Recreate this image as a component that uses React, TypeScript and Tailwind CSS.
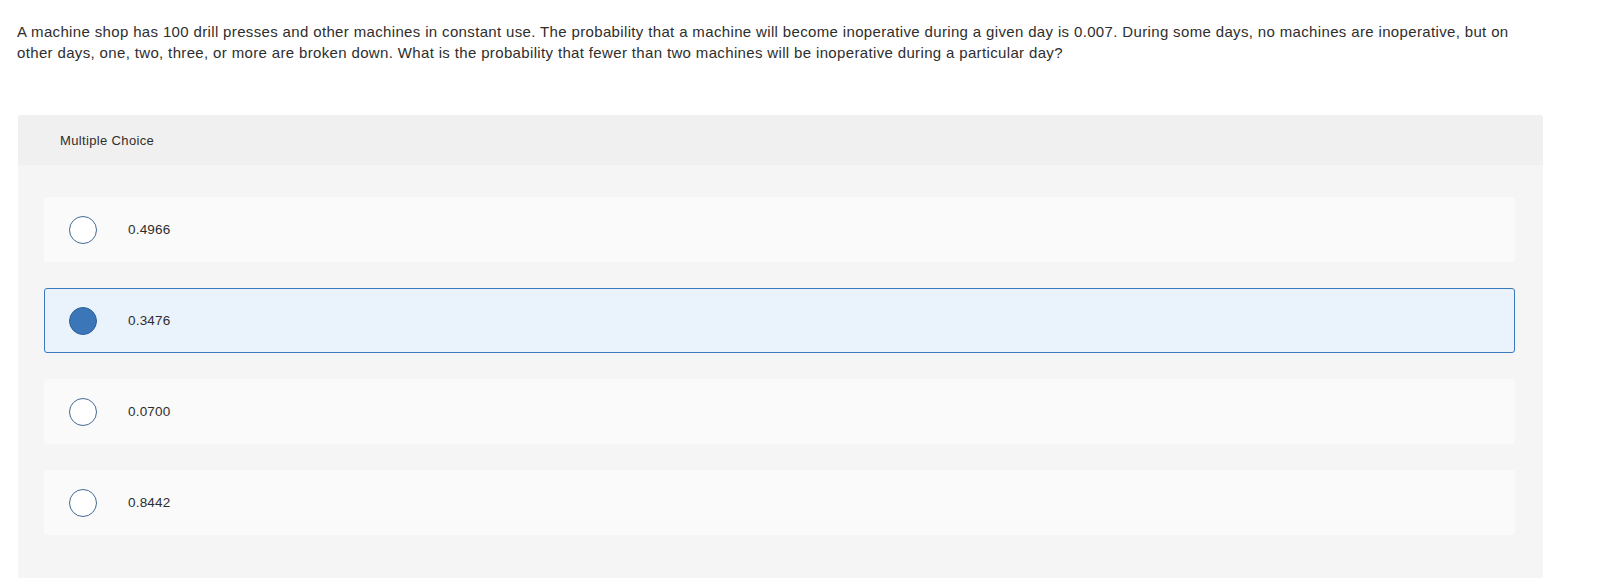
import React from "react";

const options = [
  { label: "0.4966", selected: false },
  { label: "0.3476", selected: true },
  { label: "0.0700", selected: false },
  { label: "0.8442", selected: false },
];

export default function App() {
  return (
    <div
      className="min-h-[578px] bg-white text-[#2e2e2e]"
      style={{ fontFamily: '"Liberation Sans", Arial, sans-serif' }}
    >
      <p className="w-[1525px] pl-[17px] pt-[21px] text-[15px] leading-[21px] tracking-[0.35px]">
        A machine shop has 100 drill presses and other machines in constant use. The probability that a machine will
        become inoperative during a given day is 0.007. During some days, no machines are inoperative, but on other
        days, one, two, three, or more are broken down. What is the probability that fewer than two machines will be
        inoperative during a particular day?
      </p>
      <div className="ml-[18px] mt-[52px] w-[1525px] overflow-hidden rounded-t-[3px] bg-[#f5f5f5]">
        <div className="flex h-[50px] items-center bg-[#f0f0f0] pl-[42px] pt-[1px] text-[13px] tracking-[0.35px]">
          Multiple Choice
        </div>
        <div className="flex flex-col gap-[26px] pb-[50px] pl-[26px] pr-[28px] pt-[32px]">
          {options.map((o) => (
            <div
              key={o.label}
              className={
                o.selected
                  ? "flex h-[65px] items-center rounded-[3px] border border-[#3a78c0] bg-[#eaf2fb] pl-[24px]"
                  : "flex h-[65px] items-center rounded-[3px] border border-transparent bg-[#fafafa] pl-[24px]"
              }
            >
              <span
                className={
                  o.selected
                    ? "h-[28px] w-[28px] shrink-0 rounded-full border border-[#2f609a] bg-[#3b76b8]"
                    : "h-[28px] w-[28px] shrink-0 rounded-full border-[1.5px] border-[#426a94] bg-white"
                }
              />
              <span className="ml-[31px] pt-[2px] text-[13.5px] tracking-[0.2px]">{o.label}</span>
            </div>
          ))}
        </div>
      </div>
    </div>
  );
}
